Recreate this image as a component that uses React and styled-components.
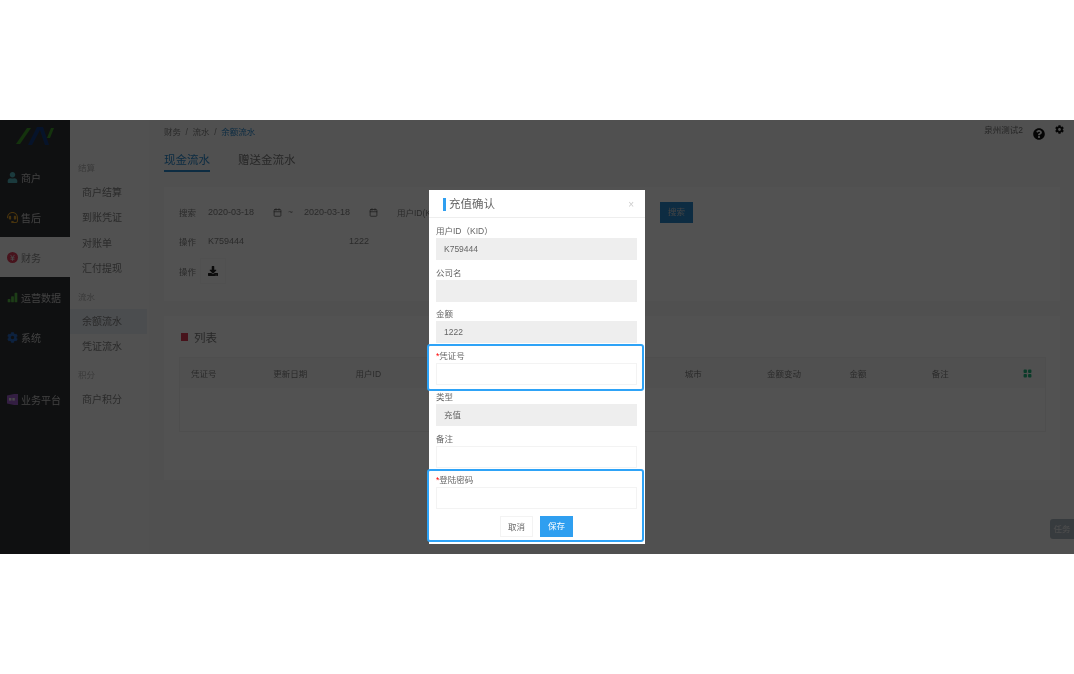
import styled, { createGlobalStyle } from "styled-components";
import { FaUser, FaHeadset, FaCog, FaDownload, FaQuestionCircle } from "react-icons/fa";
import { BsBarChartFill, BsGridFill } from "react-icons/bs";
import { LuCalendar } from "react-icons/lu";

const Global = createGlobalStyle`
  html, body { margin: 0; padding: 0; background: #fff; }
  * { box-sizing: border-box; }
  body { font-family: "Liberation Sans", "Noto Sans CJK SC", sans-serif; }
`;

const Page = styled.div`
  height: 674px;
  padding-top: 120px;
  background: #fff;
`;

const Frame = styled.div`
  position: relative;
  height: 434px;
  display: flex;
  overflow: hidden;
  background: #f2f2f2;
  filter: blur(0.35px);
`;

const Rail = styled.nav`
  width: 70px;
  flex: none;
  background: #303236;
  color: #c4c4c4;
`;

const LogoBox = styled.div`
  height: 38px;
  padding: 5px 0 0 16px;
  margin-bottom: -1px;
`;

const RailItem = styled.div`
  height: 40px;
  display: flex;
  align-items: center;
  gap: 3px;
  padding-left: 7px;
  font-size: 10px;
  margin-top: ${(p) => (p.$gap ? "22px" : "0")};
  background: ${(p) => (p.$active ? "#f2f2f2" : "transparent")};
  color: ${(p) => (p.$active ? "#888" : "#c4c4c4")};
  svg { width: 11px; height: 11px; flex: none; color: ${(p) => p.$tint}; }
`;

const SubNav = styled.nav`
  width: 79px;
  flex: none;
  background: #f5f5f5;
  padding-top: 41px;
  color: #808080;
`;

const GroupLabel = styled.div`
  height: 14px;
  line-height: 14px;
  padding-left: 8px;
  font-size: 8.5px;
  color: #b0b0b0;
  margin-bottom: ${(p) => p.$after}px;
`;

const SubItem = styled.div`
  height: 25.4px;
  line-height: 25.4px;
  width: 77px;
  padding-left: 12px;
  font-size: 10px;
  background: ${(p) => (p.$active ? "#e3e9f0" : "transparent")};
  margin-bottom: ${(p) => p.$after || 0}px;
`;

const Main = styled.main`
  flex: 1;
  min-width: 0;
  display: flex;
  flex-direction: column;
`;

const TopLine = styled.div`
  height: 32px;
  padding: 7px 10px 0 15px;
  display: flex;
  align-items: flex-start;
  justify-content: space-between;
  font-size: 8.5px;
  color: #808080;
`;

const Crumbs = styled.div`
  display: flex;
  gap: 4.6px;
  line-height: 11px;
  span:last-child { color: #2a86c8; }
`;

const UserBox = styled.div`
  display: flex;
  align-items: flex-start;
  color: #707070;
  line-height: 7px;
`;

const UserIcon = styled.span`
  display: block;
  margin-left: ${(p) => p.$left}px;
  color: #111;
  margin-top: ${(p) => p.$top}px;
  svg { display: block; width: ${(p) => p.$size}px; height: ${(p) => p.$size}px; }
`;

const Tabs = styled.div`
  height: 35px;
  padding-left: 15px;
  display: flex;
  gap: 28px;
`;

const Tab = styled.div`
  height: 20px;
  line-height: 17px;
  font-size: 11.5px;
  color: ${(p) => (p.$active ? "#2a86c8" : "#777")};
  border-bottom: 2px solid ${(p) => (p.$active ? "#2a86c8" : "transparent")};
`;

const Card = styled.section`
  margin: 0 14px ${(p) => p.$after}px 15px;
  background: #f8f8f8;
  height: ${(p) => p.$height}px;
  padding: ${(p) => p.$padding};
`;

const FilterRow = styled.div`
  display: flex;
  align-items: center;
  height: 22px;
  font-size: 8.5px;
  color: #808080;
  margin-bottom: ${(p) => p.$after || 0}px;
`;

const FilterLabel = styled.span`
  width: 21px;
  flex: none;
`;

const FilterInput = styled.div`
  width: ${(p) => p.$w}px;
  height: 22px;
  flex: none;
  display: flex;
  align-items: center;
  justify-content: space-between;
  padding: 0 3px 0 8px;
  font-size: 9px;
  color: #808080;
  svg { width: 9px; height: 9px; color: #555; }
`;

const Tilde = styled.span`
  width: 11px;
  text-align: center;
  flex: none;
`;

const IdLabel = styled.span`
  margin-left: 16px;
  width: 263px;
  flex: none;
  white-space: nowrap;
`;

const SearchBtn = styled.div`
  width: 33px;
  height: 21px;
  line-height: 21px;
  background: #2a86c8;
  color: #ccc;
  font-size: 8.5px;
  text-align: center;
`;

const DownloadBtn = styled.div`
  width: 26px;
  height: 26px;
  flex: none;
  display: flex;
  align-items: center;
  justify-content: center;
  color: #222;
  border: 1px solid #f3f3f3;
  svg { width: 10px; height: 10px; }
`;

const ListTitle = styled.div`
  display: flex;
  align-items: center;
  gap: 6px;
  height: 14px;
  font-size: 11.5px;
  color: #777;
  margin-bottom: 13px;
`;

const ListMark = styled.i`
  display: block;
  width: 7px;
  height: 8px;
  margin-left: 2px;
  background: #d63a52;
`;

const Table = styled.div`
  height: 75px;
  border: 1px solid #ececec;
`;

const TableHead = styled.div`
  height: 30px;
  display: grid;
  grid-template-columns: repeat(10, 82.3px) 1fr;
  align-items: center;
  padding-left: 11px;
  background: #f2f2f2;
  font-size: 8.5px;
  color: #808080;
  svg { width: 9px; height: 9px; color: #24b27c; margin-left: 9px; display: block; }
`;

const TaskTab = styled.div`
  position: absolute;
  right: 0;
  top: 399px;
  width: 24px;
  height: 20px;
  line-height: 20px;
  text-align: center;
  font-size: 8.5px;
  color: #e8e8e8;
  background: #a8b2bc;
  border-radius: 3px 0 0 3px;
`;

const Overlay = styled.div`
  position: absolute;
  inset: 0;
  background: rgba(0, 0, 0, 0.67);
`;

const Modal = styled.div`
  position: absolute;
  left: 429px;
  top: 70px;
  width: 216px;
  height: 354px;
  background: #fff;
  color: #555;
`;

const ModalHead = styled.div`
  height: 28px;
  display: flex;
  align-items: center;
  justify-content: space-between;
  padding: 1px 11px 0 14px;
  border-bottom: 1px solid #eee;
`;

const ModalTitle = styled.div`
  border-left: 3px solid #2f9ff0;
  padding-left: 3px;
  height: 13px;
  line-height: 13px;
  font-size: 11.5px;
  color: #666;
`;

const Close = styled.span`
  font-size: 10px;
  color: #ccc;
`;

const ModalBody = styled.div`
  padding: 6px 8px 0 7px;
`;

const Field = styled.div`
  height: 41.5px;
`;

const FieldLabel = styled.div`
  height: 14px;
  line-height: 14px;
  font-size: 8.5px;
  color: #666;
  b { color: #f00; font-weight: 400; }
`;

const FieldInput = styled.div`
  height: 22px;
  line-height: 22px;
  padding-left: 8px;
  font-size: 8.5px;
  color: #666;
  background: ${(p) => (p.$readonly ? "#eee" : "#fff")};
  border: ${(p) => (p.$readonly ? "0" : "1px solid #f3f3f3")};
`;

const ModalActions = styled.div`
  display: flex;
  justify-content: center;
  gap: 7px;
  margin-top: 1px;
`;

const ActionBtn = styled.div`
  width: 33px;
  height: 21px;
  line-height: 21px;
  text-align: center;
  font-size: 8.5px;
  color: ${(p) => (p.$primary ? "#fff" : "#666")};
  background: ${(p) => (p.$primary ? "#2f9ff0" : "#fff")};
  border: ${(p) => (p.$primary ? "0" : "1px solid #f3f3f3")};
`;

const Callout = styled.div`
  position: absolute;
  left: 427px;
  width: 217px;
  top: ${(p) => p.$top}px;
  height: ${(p) => p.$height}px;
  border: 2.5px solid #2ea3f7;
  border-radius: 3px;
`;

const Logo = () => (
  <svg width="38" height="21" viewBox="0 0 38 21">
    <polygon points="0,19 4,19 15,3 11,3" fill="#3f9a28" />
    <polygon points="12,20 16,20 24,5 29,20 33,20 27,2 21,2" fill="#143c80" />
    <polygon points="31,13 34,13 38,3 35,3" fill="#3f9a28" />
  </svg>
);

const FinanceIcon = () => (
  <svg viewBox="0 0 10 10">
    <circle cx="5" cy="5" r="5" fill="#d63a55" />
    <path d="M3.2 2.6 5 5l1.8-2.4M3.2 5.2h3.6M3.2 6.6h3.6M5 5v3" stroke="#ddd" strokeWidth=".8" fill="none" />
  </svg>
);

const PlatformIcon = () => (
  <svg viewBox="0 0 11 11">
    <path d="M0 1.5 7 0h4v11H7L0 9.5z" fill="#9a5cc8" />
    <rect x="2" y="4" width="2.4" height="2.6" fill="#ddd" />
    <rect x="5.4" y="4" width="2.4" height="2.6" fill="#ddd" />
  </svg>
);

const tableColumns = ["凭证号", "更新日期", "用户ID", "公司名", "类型", "省份", "城市", "金额变动", "金额", "备注"];

const fields = [
  { label: "用户ID（KID）", value: "K759444", readonly: true },
  { label: "公司名", value: "", readonly: true },
  { label: "金额", value: "1222", readonly: true },
  { label: "凭证号", value: "", required: true },
  { label: "类型", value: "充值", readonly: true },
  { label: "备注", value: "" },
  { label: "登陆密码", value: "", required: true },
];

export default function App() {
  return (
    <Page>
      <Global />
      <Frame>
        <Rail>
          <LogoBox>
            <Logo />
          </LogoBox>
          <RailItem $tint="#52b0b8"><FaUser />商户</RailItem>
          <RailItem $tint="#d89a28"><FaHeadset />售后</RailItem>
          <RailItem $active><FinanceIcon />财务</RailItem>
          <RailItem $tint="#58b848"><BsBarChartFill />运营数据</RailItem>
          <RailItem $tint="#2868c0"><FaCog />系统</RailItem>
          <RailItem $gap><PlatformIcon />业务平台</RailItem>
        </Rail>
        <SubNav>
          <GroupLabel $after={5}>结算</GroupLabel>
          <SubItem>商户结算</SubItem>
          <SubItem>到账凭证</SubItem>
          <SubItem>对账单</SubItem>
          <SubItem $after={8}>汇付提现</SubItem>
          <GroupLabel $after={5}>流水</GroupLabel>
          <SubItem $active>余额流水</SubItem>
          <SubItem $after={9}>凭证流水</SubItem>
          <GroupLabel $after={5}>积分</GroupLabel>
          <SubItem>商户积分</SubItem>
        </SubNav>
        <Main>
          <TopLine>
            <Crumbs>
              <span>财务</span><span>/</span><span>流水</span><span>/</span><span>余额流水</span>
            </Crumbs>
            <UserBox>
              泉州测试2
              <UserIcon $left={10} $top={1} $size={12}><FaQuestionCircle /></UserIcon>
              <UserIcon $left={10} $top={-2} $size={9}><FaCog /></UserIcon>
            </UserBox>
          </TopLine>
          <Tabs>
            <Tab $active>现金流水</Tab>
            <Tab>赠送金流水</Tab>
          </Tabs>
          <Card $height={114} $after={15} $padding="14px 0 0 15px">
            <FilterRow $after={7}>
              <FilterLabel>搜索</FilterLabel>
              <FilterInput $w={85}>2020-03-18<LuCalendar /></FilterInput>
              <Tilde>~</Tilde>
              <FilterInput $w={85}>2020-03-18<LuCalendar /></FilterInput>
              <IdLabel>用户ID(KID)</IdLabel>
              <SearchBtn>搜索</SearchBtn>
            </FilterRow>
            <FilterRow $after={8}>
              <FilterLabel>操作</FilterLabel>
              <FilterInput $w={141}>K759444</FilterInput>
              <FilterInput $w={60}>1222</FilterInput>
            </FilterRow>
            <FilterRow>
              <FilterLabel>操作</FilterLabel>
              <DownloadBtn><FaDownload /></DownloadBtn>
            </FilterRow>
          </Card>
          <Card $height={164} $after={0} $padding="14px 14px 0 15px">
            <ListTitle><ListMark />列表</ListTitle>
            <Table>
              <TableHead>
                {tableColumns.map((c) => <span key={c}>{c}</span>)}
                <BsGridFill />
              </TableHead>
            </Table>
          </Card>
        </Main>
        <TaskTab>任务</TaskTab>
        <Overlay />
        <Modal>
          <ModalHead>
            <ModalTitle>充值确认</ModalTitle>
            <Close>×</Close>
          </ModalHead>
          <ModalBody>
            {fields.map((f) => (
              <Field key={f.label}>
                <FieldLabel>{f.required && <b>*</b>}{f.label}</FieldLabel>
                <FieldInput $readonly={f.readonly}>{f.value}</FieldInput>
              </Field>
            ))}
            <ModalActions>
              <ActionBtn>取消</ActionBtn>
              <ActionBtn $primary>保存</ActionBtn>
            </ModalActions>
          </ModalBody>
        </Modal>
        <Callout $top={224} $height={47} />
        <Callout $top={349} $height={73} />
      </Frame>
    </Page>
  );
}
